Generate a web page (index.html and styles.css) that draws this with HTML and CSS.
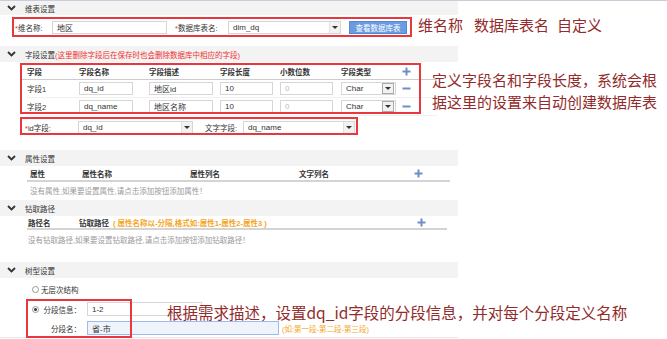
FILE: index.html
```html
<!DOCTYPE html>
<html lang="zh-CN">
<head>
    <meta charset="UTF-8">
    <meta name="viewport" content="width=device-width, initial-scale=1.0">
    <title>维表设置</title>
    <link rel="stylesheet" href="styles.css">
</head>
<body>
<div class="page">
    <div class="panel">
        <!-- 维表设置 -->
        <div class="sec-head first">
            <svg class="chev" width="9" height="6" viewBox="0 0 9 6"><path d="M1 1l3.5 3.5L8 1" stroke="#333" stroke-width="1.8" fill="none"/></svg>
            维表设置
        </div>
        <div class="sec-body body-dim">
            <div class="dim-row">
                <label class="lbl lbl-name"><span class="req">*</span>维名称:</label>
                <input type="text" class="input-field w-name" value="地区">
                <label class="lbl lbl-table"><span class="req">*</span>数据库表名:</label>
                <div class="select-box w-table"><span>dim_dq</span><i class="arrow"></i></div>
                <button type="button" class="action-button">查看数据库表</button>
            </div>
        </div>

        <!-- 字段设置 -->
        <div class="sec-head">
            <svg class="chev" width="9" height="6" viewBox="0 0 9 6"><path d="M1 1l3.5 3.5L8 1" stroke="#333" stroke-width="1.8" fill="none"/></svg>
            字段设置<span class="warn">(这里删除字段后在保存时也会删除数据库中相应的字段)</span>
        </div>
        <div class="sec-body body-fields">
            <div class="field-table">
                <div class="ft-row ft-head">
                    <span>字段</span>
                    <span>字段名称</span>
                    <span>字段描述</span>
                    <span>字段长度</span>
                    <span>小数位数</span>
                    <span>字段类型</span>
                    <svg class="ico" width="9" height="9" viewBox="0 0 9 9"><path d="M4.5 0.5v8M0.5 4.5h8" stroke="#6f8fc4" stroke-width="2"/></svg>
                </div>
                <div class="ft-row">
                    <span>字段1</span>
                    <input type="text" class="input-field w-c2" value="dq_id">
                    <input type="text" class="input-field w-c3" value="地区id">
                    <input type="text" class="input-field w-c4" value="10">
                    <input type="text" class="input-field w-c4 disabled" value="0">
                    <div class="select-box w-c6"><span>Char</span><i class="arrow boxed"></i></div>
                    <svg class="ico" width="9" height="9" viewBox="0 0 9 9"><path d="M0.5 4.5h8" stroke="#6f8fc4" stroke-width="2"/></svg>
                </div>
                <div class="ft-row">
                    <span>字段2</span>
                    <input type="text" class="input-field w-c2" value="dq_name">
                    <input type="text" class="input-field w-c3" value="地区名称">
                    <input type="text" class="input-field w-c4" value="10">
                    <input type="text" class="input-field w-c4 disabled" value="0">
                    <div class="select-box w-c6"><span>Char</span><i class="arrow boxed"></i></div>
                    <svg class="ico" width="9" height="9" viewBox="0 0 9 9"><path d="M0.5 4.5h8" stroke="#6f8fc4" stroke-width="2"/></svg>
                </div>
            </div>
            <div class="id-row">
                <label class="lbl lbl-id"><span class="req">*</span>id字段:</label>
                <div class="select-box w-id"><span>dq_id</span><i class="arrow"></i></div>
                <label class="lbl lbl-text">文字字段:</label>
                <div class="select-box w-text"><span>dq_name</span><i class="arrow"></i></div>
            </div>
        </div>

        <!-- 属性设置 -->
        <div class="sec-head">
            <svg class="chev" width="9" height="6" viewBox="0 0 9 6"><path d="M1 1l3.5 3.5L8 1" stroke="#333" stroke-width="1.8" fill="none"/></svg>
            属性设置
        </div>
        <div class="sec-body">
            <div class="list-head attr-head">
                <span>属性</span>
                <span>属性名称</span>
                <span>属性列名</span>
                <span>文字列名</span>
                <svg class="ico" width="9" height="9" viewBox="0 0 9 9"><path d="M4.5 0.5v8M0.5 4.5h8" stroke="#6f8fc4" stroke-width="2"/></svg>
            </div>
            <div class="empty-tip attr-tip">没有属性,如果要设置属性,请点击添加按钮添加属性！</div>
        </div>

        <!-- 钻取路径 -->
        <div class="sec-head">
            <svg class="chev" width="9" height="6" viewBox="0 0 9 6"><path d="M1 1l3.5 3.5L8 1" stroke="#333" stroke-width="1.8" fill="none"/></svg>
            钻取路径
        </div>
        <div class="sec-body">
            <div class="list-head drill-head">
                <span>路径名</span>
                <span>钻取路径<em class="hint">( 属性名称以-分隔,格式如:属性1-属性2-属性3 )</em></span>
                <svg class="ico" width="9" height="9" viewBox="0 0 9 9"><path d="M4.5 0.5v8M0.5 4.5h8" stroke="#6f8fc4" stroke-width="2"/></svg>
            </div>
            <div class="empty-tip drill-tip">没有钻取路径,如果要设置钻取路径,请点击添加按钮添加钻取路径！</div>
        </div>

        <!-- 树型设置 -->
        <div class="sec-head">
            <svg class="chev" width="9" height="6" viewBox="0 0 9 6"><path d="M1 1l3.5 3.5L8 1" stroke="#333" stroke-width="1.8" fill="none"/></svg>
            树型设置
        </div>
        <div class="sec-body body-tree">
            <div class="radio-row">
                <i class="radio"></i><span>无层次结构</span>
            </div>
            <div class="seg-row">
                <i class="radio checked"></i>
                <label class="seg-lbl">分段信息：</label>
                <input type="text" class="input-field w-seg" value="1-2">
            </div>
            <div class="seg-row">
                <i class="radio hidden"></i>
                <label class="seg-lbl">分段名：</label>
                <input type="text" class="input-field w-segname active" value="省-市">
                <em class="hint">(如:第一段-第二段-第三段)</em>
            </div>
        </div>
    </div>

    <!-- annotations -->
    <div class="mark m1"></div>
    <div class="mark m2"></div>
    <div class="mark m3"></div>
    <div class="mark m4"></div>
    <div class="note n1"><span class="gap-a">维名称</span><span class="gap-b">数据库表名</span>自定义</div>
    <div class="note n2">定义字段名和字段长度，系统会根<br>据这里的设置来自动创建数据库表</div>
    <div class="note n3">根据需求描述，设置dq_id字段的分段信息，并对每个分段定义名称</div>
</div>
</body>
</html>
```

FILE: styles.css
```css
body {
    margin: 0;
    font-family: "Liberation Sans", "Noto Sans CJK SC", sans-serif;
    font-size: 7.5px;
    color: #333;
    background-color: #fff;
}

.page {
    position: relative;
    width: 667px;
    height: 339px;
    overflow: hidden;
    border-top: 1px solid #c6ced9;
    box-sizing: border-box;
}

.panel {
    width: 458px;
}

.sec-head {
    display: flex;
    align-items: center;
    height: 16px;
    padding-left: 7px;
    background-color: #f3f3f3;
}

.sec-head.first {
    height: 14px;
}

.chev {
    margin-right: 9px;
}

.warn {
    color: #f03030;
}

.req {
    color: #f03030;
}

.lbl {
    display: inline-block;
}

.input-field {
    box-sizing: border-box;
    height: 13px;
    margin: 0;
    padding: 0 4px;
    border: 1px solid #d6d6d6;
    background-color: #fff;
    font-family: "Liberation Sans", "Noto Sans CJK SC", sans-serif;
    font-size: 8px;
    color: #333;
    outline: none;
}

.input-field.disabled {
    color: #bbb;
}

.input-field.active {
    background-color: #eef3fc;
    border-color: #9fbbe8;
}

.select-box {
    box-sizing: border-box;
    height: 13px;
    display: flex;
    align-items: center;
    justify-content: space-between;
    padding-left: 4px;
    border: 1px solid #d6d6d6;
    background-color: #fff;
    font-size: 8px;
}

.arrow {
    position: relative;
    width: 10px;
    height: 11px;
    background-color: #f2f2f2;
    border-left: 1px solid #e2e2e2;
}

.arrow.boxed {
    border: 1px solid #aaa;
    height: 9px;
    margin-right: 1px;
}

.arrow::after {
    content: "";
    position: absolute;
    left: 2px;
    top: 4px;
    border-top: 3px solid #333;
    border-left: 3px solid transparent;
    border-right: 3px solid transparent;
}

.arrow.boxed::after {
    left: 2px;
    top: 3px;
}

.action-button {
    box-sizing: border-box;
    width: 58px;
    height: 13px;
    margin-left: 8px;
    padding: 0;
    background-color: #6b9be0;
    color: #fff;
    border: 1px solid #5288d6;
    font-family: "Liberation Sans", "Noto Sans CJK SC", sans-serif;
    font-size: 7.5px;
}

/* 维表设置 */
.body-dim {
    height: 31px;
    padding-top: 6px;
    box-sizing: border-box;
}

.dim-row {
    display: flex;
    align-items: center;
    height: 13px;
    padding-left: 15px;
}

.lbl-name { width: 37px; }
.w-name { width: 115px; }
.lbl-table { width: 53px; margin-left: 8px; }
.w-table { width: 113px; }

/* 字段设置 */
.body-fields {
    padding: 2px 0 14px;
}

.field-table {
    margin-left: 22px;
    width: 415px;
    padding-left: 5px;
    box-sizing: border-box;
}

.ft-row {
    display: grid;
    grid-template-columns: 52px 70px 71px 60px 61px 61px 12px;
    align-items: center;
    height: 17px;
    border-bottom: 1px solid #f0f0f0;
}

.ft-head {
    height: 15px;
    font-weight: bold;
    border-bottom: 1px solid #ccc;
    margin-left: -5px;
    padding-left: 5px;
}

.w-c2 { width: 54px; }
.w-c3 { width: 64px; }
.w-c4 { width: 53px; }
.w-c6 { width: 55px; }

.ico {
    display: block;
}

.id-row {
    display: flex;
    align-items: center;
    height: 17px;
    margin-top: 3px;
    padding-left: 25px;
}

.lbl-id { width: 53px; }
.w-id { width: 115px; }
.lbl-text { width: 38px; margin-left: 12px; }
.w-text { width: 112px; }

/* 属性 / 钻取 */
.list-head {
    display: grid;
    align-items: center;
    height: 16px;
    margin-left: 27px;
    padding-left: 3px;
    border-bottom: 2px solid #d4d4d4;
    font-weight: bold;
}

.attr-head {
    width: 423px;
    grid-template-columns: 52px 108px 109px 115px 12px;
    box-sizing: border-box;
}

.drill-head {
    width: 420px;
    height: 14px;
    padding-left: 1px;
    grid-template-columns: 51px 338px 12px;
    box-sizing: border-box;
}

.hint {
    font-style: normal;
    font-weight: bold;
    color: #f5a623;
    margin-left: 4px;
}

.empty-tip {
    color: #999;
    height: 12px;
    line-height: 12px;
}

.attr-tip {
    padding: 4px 0 2px 30px;
}

.drill-tip {
    padding: 5px 0 15px 28px;
}

/* 树型设置 */
.body-tree {
    height: 60px;
    border-bottom: 1px solid #e6e6e6;
    padding-top: 3px;
    box-sizing: border-box;
}

.radio-row,
.seg-row {
    display: flex;
    align-items: center;
    height: 16px;
    padding-left: 32px;
}

.seg-row {
    margin-top: 4px;
}

.seg-row + .seg-row {
    margin-top: 3px;
}

.radio {
    box-sizing: border-box;
    width: 7px;
    height: 7px;
    border: 1px solid #999;
    border-radius: 50%;
    margin-right: 2px;
    position: relative;
}

.radio.checked::after {
    content: "";
    position: absolute;
    left: 1px;
    top: 1px;
    width: 3px;
    height: 3px;
    border-radius: 50%;
    background-color: #333;
}

.radio.hidden {
    visibility: hidden;
}

.seg-lbl {
    width: 46px;
    padding-right: 6px;
    box-sizing: border-box;
    text-align: right;
}

.w-seg {
    width: 115px;
    height: 14px;
}

.w-segname {
    width: 192px;
    height: 14px;
}

.seg-row .hint {
    font-weight: normal;
    margin-left: 3px;
}

/* annotations */
.mark {
    position: absolute;
    box-sizing: border-box;
    border: 2px solid #e8383d;
}

.m1 { left: 12px; top: 16px; width: 400px; height: 20px; }
.m2 { left: 20px; top: 62px; width: 401px; height: 51px; }
.m3 { left: 20px; top: 116px; width: 338px; height: 18px; }
.m4 { left: 26px; top: 298px; width: 106px; height: 39px; }

.note {
    position: absolute;
    font-family: "Noto Sans CJK SC", sans-serif;
    font-size: 15px;
    line-height: 20px;
    color: #922b2b;
    white-space: nowrap;
}

.gap-a { margin-right: 11px; }
.gap-b { margin-right: 8px; }

.n1 { left: 418px; top: 14px; }
.n2 { left: 432px; top: 68px; line-height: 22px; }
.n3 { left: 167px; top: 301px; font-size: 15.5px; }
```
